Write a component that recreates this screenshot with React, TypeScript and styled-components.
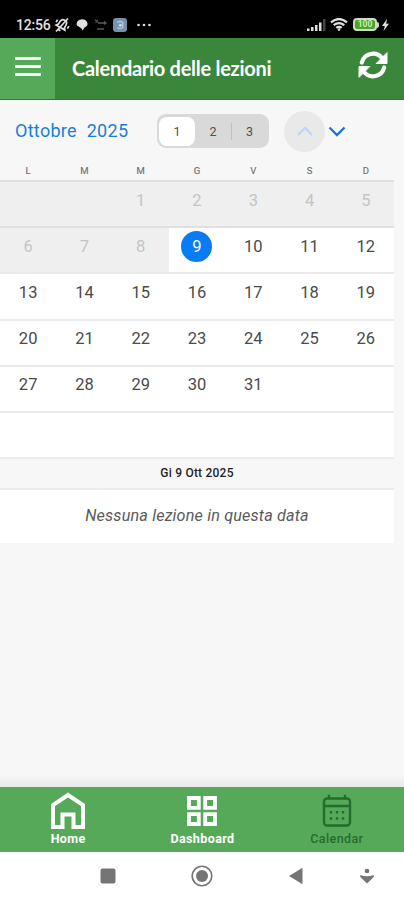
import React from "react";
import styled, { createGlobalStyle } from "styled-components";

const GlobalStyle = createGlobalStyle`
  * { box-sizing: border-box; }
  html, body { margin: 0; padding: 0; }
  body { background: #f7f7f7; font-family: Roboto, "Liberation Sans", sans-serif; }
  button { border: 0; padding: 0; background: none; font: inherit; color: inherit; }
  svg { display: block; flex: none; }
`;

const Screen = styled.div`
  width: 404px;
  height: 900px;
  display: flex;
  flex-direction: column;
  overflow: hidden;
  background: #f7f7f7;
`;

const StatusBar = styled.div`
  height: 38px;
  flex: none;
  display: flex;
  align-items: center;
  justify-content: space-between;
  padding: 11px 15px 0 16px;
  background: #000;
  color: #e0e0e0;
`;

const Clock = styled.span`
  width: 37px;
  font-size: 14px;
  font-weight: 500;
  line-height: 16px;
  letter-spacing: -0.2px;
  white-space: nowrap;
`;

const StatusGroup = styled.div`
  display: flex;
  align-items: center;
`;

const NoticeIcons = styled.div`
  display: flex;
  align-items: center;
  gap: 6px;
  margin-left: 5px;
`;

const RadioIcons = styled.div`
  display: flex;
  align-items: center;
  gap: 4px;
`;

const BatteryShell = styled.span`
  width: 24px;
  height: 13px;
  margin-left: 5px;
  display: flex;
  align-items: center;
  justify-content: center;
  border: 2px solid #d1d9cd;
  border-radius: 4px;
  background: #49a626;
  color: #c9efb2;
  font-size: 8.5px;
  font-weight: 700;
  line-height: 9px;
`;

const BatteryTip = styled.span`
  width: 2px;
  height: 6px;
  margin-right: 3px;
  border-radius: 0 2px 2px 0;
  background: #d1d9cd;
`;

const Header = styled.header`
  height: 62px;
  flex: none;
  display: flex;
  align-items: center;
  background: #3a873c;
  color: #fff;
  border-bottom: 1px solid #347a37;
`;

const MenuButton = styled.button`
  width: 55px;
  height: 61px;
  display: flex;
  flex-direction: column;
  align-items: center;
  justify-content: center;
  gap: 5px;
  padding-bottom: 5px;
  background: #57a95a;
`;

const MenuLine = styled.span`
  width: 26px;
  height: 3px;
  background: #f4fbf4;
`;

const Title = styled.h1`
  flex: 1;
  margin: 0 0 1px 17px;
  font: 700 20px/26px Lato, sans-serif;
  letter-spacing: -0.28px;
  white-space: nowrap;
`;

const RefreshButton = styled.button`
  margin: 0 16px 7px 0;
`;

const Controls = styled.div`
  height: 62px;
  flex: none;
  display: flex;
  align-items: center;
  padding-left: 15px;
`;

const Month = styled.div`
  width: 142px;
  font-size: 18px;
  line-height: 22px;
  color: #1b7ed6;
  word-spacing: 5px;
  letter-spacing: 0.3px;
  white-space: nowrap;
`;

const Segments = styled.div`
  width: 112px;
  height: 34px;
  display: flex;
  align-items: center;
  padding: 2px;
  border-radius: 9px;
  background: #d9d9d9;
`;

const Segment = styled.button<{ $active?: boolean; $divided?: boolean }>`
  width: 36px;
  height: ${(p) => (p.$active ? "29px" : "17px")};
  border-radius: ${(p) => (p.$active ? "8px" : "0")};
  border-left: ${(p) => (p.$divided ? "1px solid #bfbfbf" : "0")};
  background: ${(p) => (p.$active ? "#fff" : "transparent")};
  font-size: 12.5px;
  line-height: 17px;
  color: #505050;
`;

const ArrowButton = styled.button<{ $pressed?: boolean }>`
  width: ${(p) => (p.$pressed ? "41px" : "24px")};
  height: 41px;
  margin-left: ${(p) => (p.$pressed ? "15px" : "0")};
  display: flex;
  align-items: center;
  justify-content: center;
  border-radius: 50%;
  background: ${(p) => (p.$pressed ? "#e9e9e9" : "transparent")};
`;

const Calendar = styled.section`
  width: 394px;
  flex: none;
`;

const Weekdays = styled.div`
  height: 18px;
  display: grid;
  grid-template-columns: repeat(7, 1fr);
  justify-items: center;
  font-size: 9.5px;
  line-height: 18px;
  color: #707070;
  -webkit-text-stroke: 0.15px #707070;
`;

const Days = styled.div`
  height: 277px;
  display: grid;
  grid-template-columns: repeat(7, 1fr);
  grid-template-rows: repeat(6, 1fr);
`;

const Day = styled.div<{ $past: boolean; $edge: boolean }>`
  display: flex;
  justify-content: center;
  align-items: flex-start;
  padding-top: 2.6px;
  border-top: 2px solid ${(p) => (p.$edge ? "#e0e0e0" : "#ebebeb")};
  background: ${(p) => (p.$past ? "#efefef" : "#fff")};
  color: ${(p) => (p.$past ? "#c4c4c4" : "#4a4a4a")};
`;

const DayNumber = styled.span<{ $selected: boolean }>`
  width: 31px;
  height: 31px;
  border-radius: 50%;
  background: ${(p) => (p.$selected ? "#087bf5" : "transparent")};
  color: ${(p) => (p.$selected ? "#fff" : "inherit")};
  font-size: 16.5px;
  line-height: 31px;
  text-align: center;
`;

const DateHeading = styled.h2`
  height: 33px;
  margin: 0;
  border: solid #ececec;
  border-width: 2px 0;
  background: #f7f7f7;
  font-size: 12px;
  font-weight: 500;
  line-height: 28px;
  letter-spacing: 0.22px;
  text-align: center;
  color: #1f1f1f;
`;

const EmptyMessage = styled.p`
  height: 53px;
  margin: 0;
  background: #fff;
  color: #5a5a5a;
  font-size: 16.2px;
  font-style: italic;
  line-height: 51px;
  letter-spacing: 0.17px;
  text-align: center;
  white-space: nowrap;
`;

const Spacer = styled.div`
  flex: 1;
  background: linear-gradient(to bottom, transparent calc(100% - 12px), #e9e9e9);
`;

const TabBar = styled.nav`
  height: 65px;
  flex: none;
  display: grid;
  grid-template-columns: repeat(3, 1fr);
  padding-left: 1px;
  background: #57a95a;
`;

const Tab = styled.button<{ $current?: boolean }>`
  display: flex;
  flex-direction: column;
  align-items: center;
  padding-top: 4.5px;
  color: ${(p) => (p.$current ? "#256d2d" : "#fff")};
  font-size: 12.5px;
  font-weight: ${(p) => (p.$current ? 500 : 700)};
  line-height: 15px;
  letter-spacing: 0.4px;
`;

const TabIcon = styled.span`
  height: 39px;
  display: flex;
  align-items: center;
`;

const SystemNav = styled.div`
  height: 48px;
  flex: none;
  display: flex;
  align-items: center;
  padding-left: 100px;
  background: #fff;
  color: #757575;
`;

const SystemButton = styled.button<{ $gap?: number }>`
  margin-left: ${(p) => p.$gap ?? 0}px;
`;

const MutedBell = () => (
  <svg width="18" height="16" viewBox="0 0 18 16" fill="none" stroke="currentColor" strokeWidth="1.7">
    <g transform="rotate(30 9 8)">
      <path d="M4 11 5.5 9V6.2q0-3.7 3.5-3.7t3.5 3.7V9l1.5 2Z" />
      <path d="M7.5 13.8h3M2.5 5.5v3M15.5 5.5v3" />
    </g>
    <path d="M3 14.5 15 1.5" />
  </svg>
);

const ChatBubble = () => (
  <svg width="12" height="12" viewBox="0 0 12 12" fill="currentColor">
    <path d="M3.5.8Q6-.2 9 .8q3.5 2.5 2.2 5.6L8.3 8.8 6.7 11.5 5.3 9.2 1 6.6Q-.5 3 3.5.8Z" />
  </svg>
);

const DimNotice = () => (
  <svg width="13" height="12" viewBox="0 0 13 12" fill="none" stroke="#5a5a5a" strokeWidth="1.3">
    <path d="m1 1 3 2.5M4 1 1.5 3.5M4 4h7.5M3 10h7M10 2.5 12 4l-2 1.5" />
  </svg>
);

const AppBadge = () => (
  <svg width="14" height="14" viewBox="0 0 14 14">
    <rect width="14" height="14" rx="3" fill="#7392ad" />
    <path d="M4.2 4.5q3-2 5.6 0v5q-3 2-5.6 0" fill="none" stroke="#b5cbdd" strokeWidth="1.3" />
    <circle cx="7.3" cy="7.3" r="1.4" fill="#d3e1ec" />
  </svg>
);

const DotsBox = styled.span`
  margin-left: 4px;
`;

const MoreDots = () => (
  <DotsBox>
    <svg width="14" height="4" viewBox="0 0 14 4" fill="currentColor">
      <circle cx="1.5" cy="2" r="1.3" />
      <circle cx="7" cy="2" r="1.3" />
      <circle cx="12.5" cy="2" r="1.3" />
    </svg>
  </DotsBox>
);

const Signal = () => (
  <svg width="19" height="12" viewBox="0 0 19 12" fill="currentColor">
    <path d="M0 9.5h2.5V12H0zM4 8h2.5v4H4zM8 6h2.5v6H8zM12 3.5h2.5V12H12z" />
    <path d="M16 0h2.5v12H16z" fill="#464646" />
  </svg>
);

const Wifi = () => (
  <svg width="18" height="13" viewBox="0 0 18 13" fill="none" stroke="currentColor" strokeWidth="2.2">
    <path d="M1 4.3Q9-2.3 17 4.3M3.7 7.2q5.3-4.3 10.6 0M6.3 9.8q2.7-2 5.4 0" />
    <circle cx="9" cy="11.6" r="1.3" fill="currentColor" stroke="none" />
  </svg>
);

const Bolt = () => (
  <svg width="7" height="12" viewBox="0 0 7 12" fill="currentColor">
    <path d="M5 0 0 7h2.8L1.5 12 7 4.8H4.2Z" />
  </svg>
);

const Refresh = () => (
  <svg width="30" height="28" viewBox="0 0 30 28" fill="none" stroke="currentColor" strokeWidth="4.2" strokeLinecap="round">
    <path d="M3.8 11.5A11.6 11.6 0 0 1 24 7" />
    <path d="M29 2v10.5H18.5Z" fill="currentColor" stroke="currentColor" strokeWidth="1" strokeLinejoin="round" />
    <path d="M26.2 16.5A11.6 11.6 0 0 1 6 21" />
    <path d="M1 26V15.5h10.5Z" fill="currentColor" stroke="currentColor" strokeWidth="1" strokeLinejoin="round" />
  </svg>
);

const Chevron = ({ up }: { up?: boolean }) => (
  <svg width="18" height="12" viewBox="0 0 18 12" fill="none" strokeWidth="2.3" stroke={up ? "#bcd8f7" : "#1b76d2"}>
    <path d={up ? "m2 10 7-7 7 7" : "m1.5 2.5 7.5 7.5 7.5-7.5"} />
  </svg>
);

const HomeIcon = () => (
  <svg width="34" height="38" viewBox="0 0 34 38" fill="none" stroke="currentColor" strokeWidth="4">
    <path d="M2 35V13L17 3l15 10v22h-9.5V22.5h-11V35H2Z" />
  </svg>
);

const DashboardIcon = () => (
  <svg width="32" height="32" viewBox="0 0 32 32" fill="none" stroke="currentColor" strokeWidth="3.8">
    <path d="M3 3h9.8v9.8H3zM19.2 3H29v9.8h-9.8zM3 19.2h9.8V29H3zM19.2 19.2H29V29h-9.8z" />
  </svg>
);

const CalendarIcon = () => (
  <svg width="30" height="34" viewBox="0 0 30 34" fill="none" stroke="currentColor" strokeWidth="2.4">
    <rect x="2" y="4.5" width="26" height="27" rx="3" />
    <path d="M2 12h26M7 .8v4.5M23 .8v4.5" />
    <path d="M7.8 18.2h2.4M13.8 18.2h2.4M19.8 18.2h2.4M7.8 24.5h2.4M13.8 24.5h2.4M19.8 24.5h2.4" />
  </svg>
);

const Recents = () => (
  <svg width="16" height="16" viewBox="0 0 16 16">
    <rect x=".5" y=".5" width="15" height="15" rx="2" fill="currentColor" />
  </svg>
);

const HomeCircle = () => (
  <svg width="22" height="22" viewBox="0 0 22 22">
    <circle cx="11" cy="11" r="9.8" fill="none" stroke="currentColor" strokeWidth="1.6" />
    <circle cx="11" cy="11" r="6" fill="currentColor" />
  </svg>
);

const Back = () => (
  <svg width="15" height="18" viewBox="0 0 15 18" fill="currentColor">
    <path d="M14.5.8v16.4L1 9Z" />
  </svg>
);

const HideNav = () => (
  <svg width="14" height="16" viewBox="0 0 14 16" fill="currentColor">
    <circle cx="7" cy="3" r="2.3" />
    <path d="M.3 7Q7 9.5 13.7 7v2L7 15.5.3 9Z" />
  </svg>
);

const weekdays = ["L", "M", "M", "G", "V", "S", "D"];
const cells = Array.from({ length: 42 }, (_, i) => i - 1);

export default function App() {
  return (
    <>
      <GlobalStyle />
      <Screen>
        <StatusBar>
          <StatusGroup>
            <Clock>12:56</Clock>
            <MutedBell />
            <NoticeIcons>
              <ChatBubble />
              <DimNotice />
              <AppBadge />
              <MoreDots />
            </NoticeIcons>
          </StatusGroup>
          <StatusGroup>
            <RadioIcons>
              <Signal />
              <Wifi />
            </RadioIcons>
            <BatteryShell>100</BatteryShell>
            <BatteryTip />
            <Bolt />
          </StatusGroup>
        </StatusBar>

        <Header>
          <MenuButton aria-label="Menu">
            <MenuLine />
            <MenuLine />
            <MenuLine />
          </MenuButton>
          <Title>Calendario delle lezioni</Title>
          <RefreshButton aria-label="Aggiorna">
            <Refresh />
          </RefreshButton>
        </Header>

        <Controls>
          <Month>Ottobre 2025</Month>
          <Segments>
            <Segment $active>1</Segment>
            <Segment>2</Segment>
            <Segment $divided>3</Segment>
          </Segments>
          <ArrowButton $pressed aria-label="Precedente">
            <Chevron up />
          </ArrowButton>
          <ArrowButton aria-label="Successivo">
            <Chevron />
          </ArrowButton>
        </Controls>

        <Calendar>
          <Weekdays>
            {weekdays.map((name, i) => (
              <span key={i}>{name}</span>
            ))}
          </Weekdays>
          <Days>
            {cells.map((day, i) => (
              <Day key={i} $past={day < 9} $edge={i < 14}>
                {day > 0 && day <= 31 && <DayNumber $selected={day === 9}>{day}</DayNumber>}
              </Day>
            ))}
          </Days>
          <DateHeading>Gi 9 Ott 2025</DateHeading>
          <EmptyMessage>Nessuna lezione in questa data</EmptyMessage>
        </Calendar>

        <Spacer />

        <TabBar>
          <Tab>
            <TabIcon>
              <HomeIcon />
            </TabIcon>
            Home
          </Tab>
          <Tab>
            <TabIcon>
              <DashboardIcon />
            </TabIcon>
            Dashboard
          </Tab>
          <Tab $current>
            <TabIcon>
              <CalendarIcon />
            </TabIcon>
            Calendar
          </Tab>
        </TabBar>

        <SystemNav>
          <SystemButton aria-label="Recenti">
            <Recents />
          </SystemButton>
          <SystemButton $gap={75} aria-label="Home">
            <HomeCircle />
          </SystemButton>
          <SystemButton $gap={75} aria-label="Indietro">
            <Back />
          </SystemButton>
          <SystemButton $gap={57} aria-label="Nascondi">
            <HideNav />
          </SystemButton>
        </SystemNav>
      </Screen>
    </>
  );
}
